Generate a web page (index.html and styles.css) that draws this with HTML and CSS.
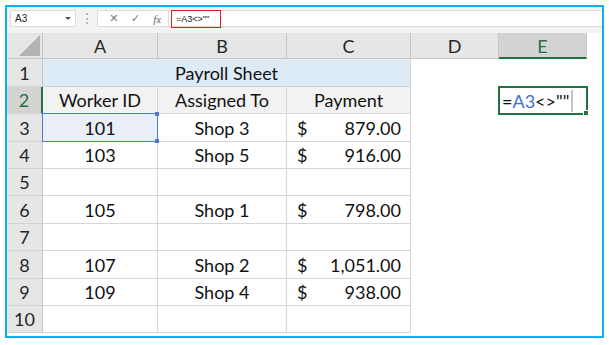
FILE: index.html
```html
<!DOCTYPE html>
<html lang="en">
<head>
  <meta charset="UTF-8" />
  <title>Payroll Sheet</title>
  <link rel="stylesheet" href="styles.css">
</head>
<body>
  <div class="frame">
    <div class="formula-bar">
      <div class="name-box"><span>A3</span><span class="caret"></span></div>
      <div class="grip"></div>
      <div class="formula">
        <div class="fx-buttons">
          <span class="btn">&#x2715;</span>
          <span class="btn">&#x2713;</span>
          <span class="btn fx">fx</span>
        </div>
        <div class="formula-input">
          <span class="formula-text">=A3&lt;&gt;""</span>
        </div>
      </div>
    </div>

    <div class="sheet">
      <div class="row head-row">
        <div class="corner"><span class="tri"></span></div>
        <div class="col-head">A</div>
        <div class="col-head">B</div>
        <div class="col-head">C</div>
        <div class="col-head">D</div>
        <div class="col-head active">E</div>
        <div></div>
      </div>

      <div class="row h28">
        <div class="rn">1</div>
        <div class="cell title">Payroll Sheet</div>
        <div class="free"></div><div class="free"></div><div></div>
      </div>
      <div class="row h27">
        <div class="rn active">2</div>
        <div class="cell label">Worker ID</div>
        <div class="cell label">Assigned To</div>
        <div class="cell label">Payment</div>
        <div class="free"></div>
        <div class="free editing"><span class="eq">=</span><span class="ref">A3</span><span>&lt;&gt;""</span><span class="cursor"></span></div>
        <div></div>
      </div>
      <div class="row h28">
        <div class="rn">3</div>
        <div class="cell ref-cell">101</div>
        <div class="cell">Shop 3</div>
        <div class="cell money"><span>$</span><span>879.00</span></div>
        <div class="free"></div><div class="free"></div><div></div>
      </div>
      <div class="row h27">
        <div class="rn">4</div>
        <div class="cell">103</div>
        <div class="cell">Shop 5</div>
        <div class="cell money"><span>$</span><span>916.00</span></div>
        <div class="free"></div><div class="free"></div><div></div>
      </div>
      <div class="row h27">
        <div class="rn">5</div>
        <div class="cell"></div>
        <div class="cell"></div>
        <div class="cell"></div>
        <div class="free"></div><div class="free"></div><div></div>
      </div>
      <div class="row h28">
        <div class="rn">6</div>
        <div class="cell">105</div>
        <div class="cell">Shop 1</div>
        <div class="cell money"><span>$</span><span>798.00</span></div>
        <div class="free"></div><div class="free"></div><div></div>
      </div>
      <div class="row h27">
        <div class="rn">7</div>
        <div class="cell"></div>
        <div class="cell"></div>
        <div class="cell"></div>
        <div class="free"></div><div class="free"></div><div></div>
      </div>
      <div class="row h28">
        <div class="rn">8</div>
        <div class="cell">107</div>
        <div class="cell">Shop 2</div>
        <div class="cell money"><span>$</span><span>1,051.00</span></div>
        <div class="free"></div><div class="free"></div><div></div>
      </div>
      <div class="row h27">
        <div class="rn">9</div>
        <div class="cell">109</div>
        <div class="cell">Shop 4</div>
        <div class="cell money"><span>$</span><span>938.00</span></div>
        <div class="free"></div><div class="free"></div><div></div>
      </div>
      <div class="row h27">
        <div class="rn">10</div>
        <div class="cell"></div>
        <div class="cell"></div>
        <div class="cell"></div>
        <div class="free"></div><div class="free"></div><div></div>
      </div>
    </div>
  </div>
</body>
</html>
```

FILE: styles.css
```css
* {
  box-sizing: border-box;
  margin: 0;
  padding: 0;
}

body {
  background: #fff;
  font-family: Lato, "Liberation Sans", sans-serif;
  color: #111;
}

.frame {
  margin: 5px;
  width: 599px;
  height: 333px;
  border: 2px solid #0cb0ee;
  overflow: hidden;
  background: #fff;
}

/* formula bar */
.formula-bar {
  height: 26px;
  background: #f3f3f3;
  display: flex;
  align-items: flex-start;
  padding: 3px 0 0 3px;
}

.name-box {
  width: 66px;
  height: 17px;
  background: #fff;
  border: 1px solid #dcdcdc;
  display: flex;
  align-items: center;
  justify-content: space-between;
  padding: 0 4px 0 4px;
  font-family: "Liberation Sans", sans-serif;
  font-size: 10px;
  color: #222;
}

.caret {
  width: 0;
  height: 0;
  border-left: 3px solid transparent;
  border-right: 3px solid transparent;
  border-top: 3px solid #555;
}

.grip {
  width: 2px;
  height: 11px;
  margin: 3px 9px 0 10px;
  border-left: 2px dotted #b8b8b8;
}

.formula {
  flex: 1;
  height: 17px;
  display: flex;
  background: #fff;
  border-top: 1px solid #dcdcdc;
  border-bottom: 1px solid #dcdcdc;
}

.fx-buttons {
  width: 72px;
  display: flex;
  align-items: center;
  border-left: 1px solid #dcdcdc;
  border-right: 1px solid #dcdcdc;
  padding-left: 5px;
}

.btn {
  width: 23px;
  text-align: center;
  color: #7a7a7a;
  font-family: "DejaVu Sans", sans-serif;
  font-size: 11px;
}

.btn.fx {
  font-family: "Liberation Serif", serif;
  font-style: italic;
  font-size: 11px;
  color: #666;
}

.formula-input {
  flex: 1;
  display: flex;
  align-items: flex-start;
  padding-left: 2px;
  margin-top: -1px;
}

.formula-text {
  display: flex;
  align-items: center;
  width: 50px;
  height: 18px;
  border: 1.5px solid #e01c1c;
  padding-left: 4px;
  font-family: "Liberation Sans", sans-serif;
  font-size: 9px;
  color: #222;
}

/* grid */
.sheet {
  font-size: 18px;
}

.row {
  display: grid;
  grid-template-columns: 36px 115px 129px 124px 88px 88px 1fr;
}

.h27 { height: 27px; }
.h28 { height: 28px; }

.head-row {
  height: 26px;
}

.corner {
  background: #e6e6e6;
  border-right: 1px solid #c6c6c6;
  border-bottom: 1px solid #c6c6c6;
  position: relative;
}

.tri {
  position: absolute;
  right: 2px;
  bottom: 2px;
  width: 21px;
  height: 21px;
  background: #b4b4b4;
  clip-path: polygon(100% 0, 100% 100%, 0 100%);
}

.col-head {
  background: #e6e6e6;
  border-right: 1px solid #c6c6c6;
  border-bottom: 1px solid #c6c6c6;
  display: flex;
  align-items: center;
  justify-content: center;
  color: #262626;
  padding-top: 1px;
}

.col-head.active {
  background: #d3d3d3;
  color: #217346;
  border-bottom: 2px solid #217346;
}

.rn {
  background: #e6e6e6;
  border-right: 1px solid #c6c6c6;
  border-bottom: 1px solid #d2d2d2;
  display: flex;
  align-items: center;
  justify-content: center;
  color: #262626;
}

.rn.active {
  background: #d3d3d3;
  color: #217346;
  border-right: 2px solid #217346;
}

.cell {
  border-right: 1px solid #d6d6d6;
  border-bottom: 1px solid #d6d6d6;
  display: flex;
  align-items: center;
  justify-content: center;
  white-space: nowrap;
}

.title {
  grid-column: span 3;
  background: #ddebf7;
  border-bottom-color: #c9d3dc;
}

.label {
  background: #f2f2f2;
}

.money {
  justify-content: space-between;
  padding: 0 9px 0 10px;
}

.ref-cell {
  position: relative;
  background: #e9eef7;
  border: 1px solid #4a7bd0;
  margin: -1px 0 0 -1px;
}

.ref-cell::before,
.ref-cell::after {
  content: "";
  position: absolute;
  width: 4px;
  height: 4px;
  background: #4a7bd0;
  right: -2px;
}

.ref-cell::before { top: -2px; }
.ref-cell::after { bottom: -2px; }

.editing {
  position: relative;
  display: flex;
  align-items: center;
  padding-left: 3px;
  outline: 2px solid #217346;
  outline-offset: -1px;
  white-space: nowrap;
}

.editing .ref {
  color: #3f6fcf;
}

.cursor {
  width: 2px;
  height: 22px;
  background: #c4c4c4;
  margin-left: 2px;
}

.editing::after {
  content: "";
  position: absolute;
  right: -2px;
  bottom: -2px;
  width: 4px;
  height: 4px;
  background: #217346;
  border: 1px solid #fff;
}
```
